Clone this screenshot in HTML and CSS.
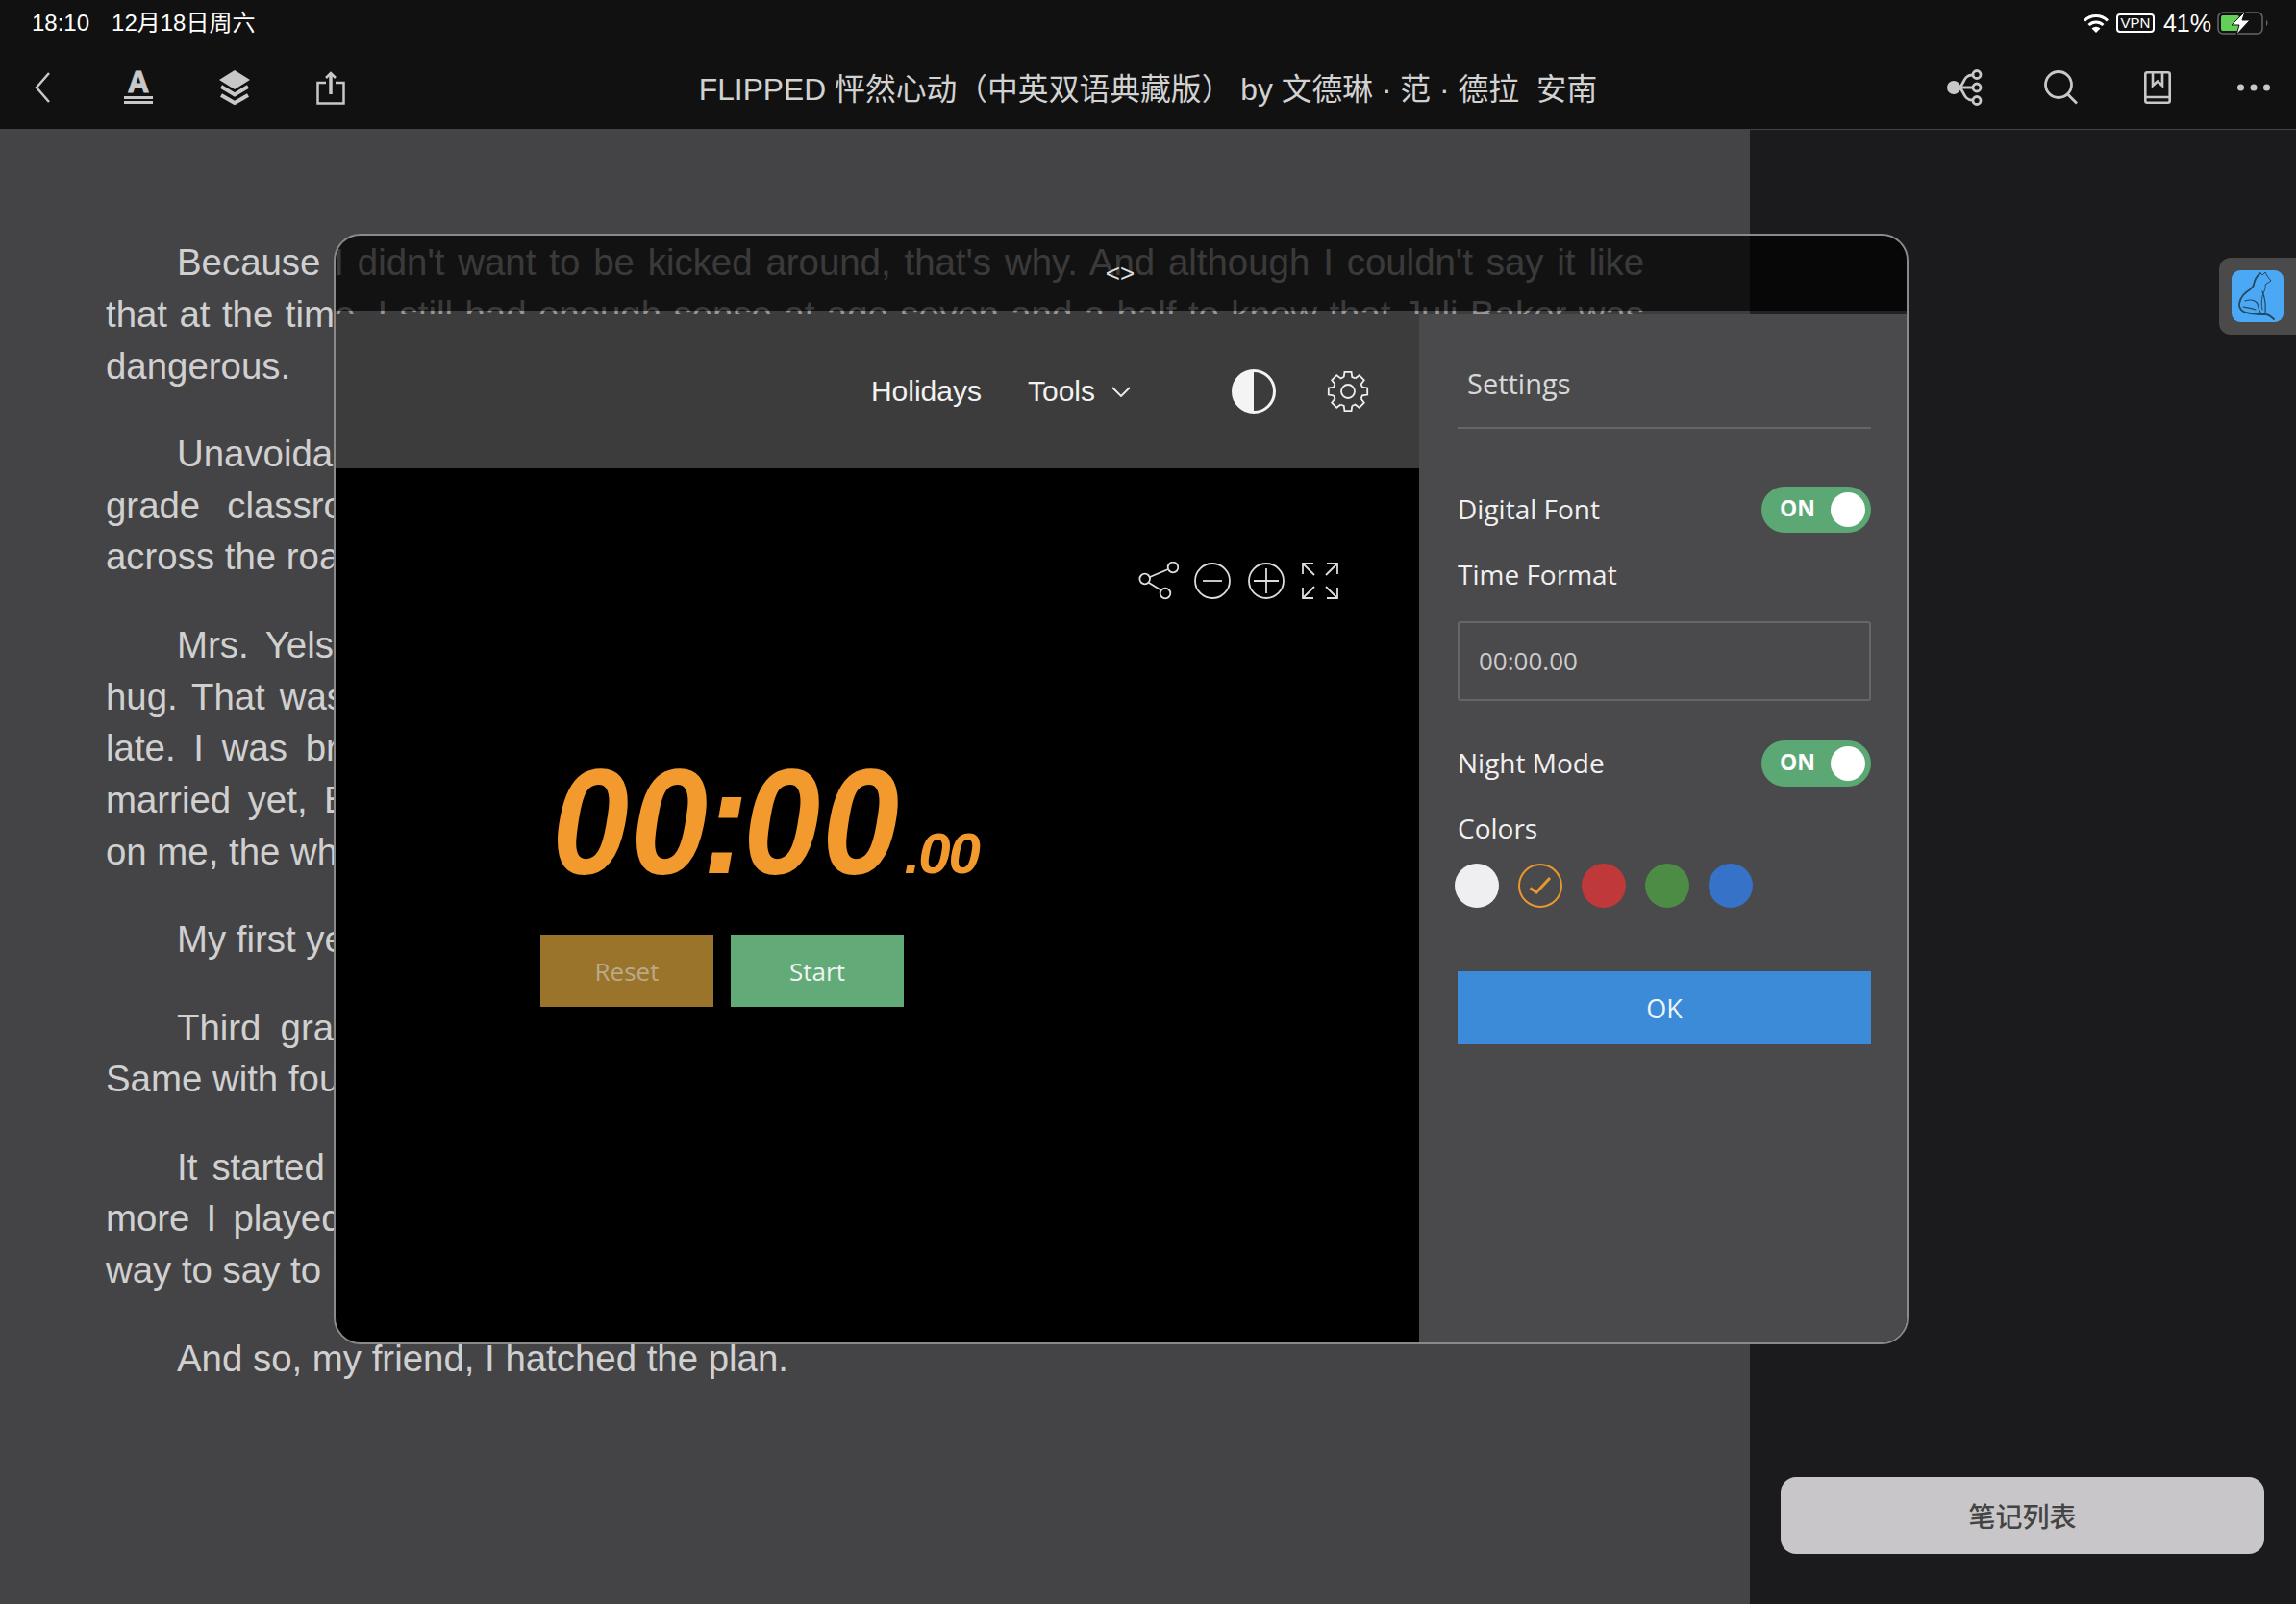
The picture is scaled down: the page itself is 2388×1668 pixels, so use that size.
FILE: index.html
```html
<!DOCTYPE html>
<html lang="en">
<head>
  <meta charset="UTF-8">
  <meta name="viewport" content="width=device-width, initial-scale=1.0">
  <title>FLIPPED</title>
  <link rel="stylesheet" href="styles.css">
</head>
<body>
<div class="screen">
  <header class="topbar">
    <div class="status">
      <div class="status-left"><span>18:10</span><span>12月18日周六</span></div>
      <div class="status-right">
        <svg class="wifi" viewBox="0 0 28 20"><path d="M2 7.500a17 17 0 0 1 24 0M6.500 12a11 11 0 0 1 15 0" fill="none" stroke="#fff" stroke-width="3"/><path d="M14 20l-4.500-4.500a6.500 6.500 0 0 1 9 0z" fill="#fff"/></svg>
        <span class="vpn">VPN</span>
        <span class="percent">41%</span>
        <svg class="battery" viewBox="0 0 54 24"><rect x="1" y="1" width="46" height="22" rx="5" fill="none" stroke="#666" stroke-width="1.500"/><rect x="4" y="4" width="19" height="16" rx="2" fill="#63cf57"/><path d="M51 8.500q3 3.500 0 7z" fill="#666"/><path d="M29 0L15 14h8l-3 10 14-15h-8z" fill="#fff" stroke="#111"/></svg>
      </div>
    </div>
    <div class="toolbar">
      <div class="tools">
        <span class="tool"><svg width="16" height="32" viewBox="0 0 16 32"><path d="M15 1L2 16l13 15" fill="none" stroke="#c8c8c8" stroke-width="2.500"/></svg></span>
        <span class="tool"><span class="font-a"><span class="font-a-letter">A</span><i></i><i></i></span></span>
        <span class="tool"><svg width="32" height="36" viewBox="0 0 32 36"><path d="M16 0l16 10-16 10L0 10z" fill="#c8c8c8"/><path d="M2 17l14 8.500L30 17M2 26l14 8 14-8" fill="none" stroke="#c8c8c8" stroke-width="4"/></svg></span>
        <span class="tool"><svg width="30" height="35" viewBox="0 0 30 35"><path d="M10 12H1.500v21.500h27V12H20" fill="none" stroke="#c8c8c8" stroke-width="2.500"/><path d="M15 3v21" stroke="#c8c8c8" stroke-width="3.500"/><path d="M10 7l5-5 5 5" fill="none" stroke="#c8c8c8" stroke-width="2.500"/></svg></span>
      </div>
      <div class="book-title">FLIPPED 怦然心动（中英双语典藏版） by 文德琳 · 范 · 德拉&nbsp; 安南</div>
      <div class="tools tools-right">
        <span class="tool"><svg width="38" height="38" viewBox="0 0 38 38"><circle cx="7" cy="19" r="7" fill="#c8c8c8"/><path d="M7 19h20M11 19c7 0 5-13 15-13M11 19c7 0 5 13 15 13" fill="none" stroke="#c8c8c8" stroke-width="2.800"/><g fill="#111" stroke="#c8c8c8" stroke-width="2.800"><circle cx="31" cy="5.500" r="4"/><circle cx="31" cy="19" r="4"/><circle cx="31" cy="32.500" r="4"/></g></svg></span>
        <span class="tool"><svg width="36" height="36" viewBox="0 0 36 36"><circle cx="15" cy="15" r="13.500" fill="none" stroke="#c8c8c8" stroke-width="2.800"/><path d="M24.500 25L34 34.500" stroke="#c8c8c8" stroke-width="2.800"/></svg></span>
        <span class="tool"><svg width="28" height="34" viewBox="0 0 28 34"><rect x="1.300" y="1.300" width="25.400" height="31.400" rx="2" fill="none" stroke="#c8c8c8" stroke-width="2.600"/><path d="M1 27h26M9 1v14l5-4.500 5 4.500V1" fill="none" stroke="#c8c8c8" stroke-width="2.600"/></svg></span>
        <span class="tool"><svg width="34" height="8" viewBox="0 0 34 8"><g fill="#c8c8c8"><circle cx="3.500" cy="4" r="3.500"/><circle cx="17" cy="4" r="3.500"/><circle cx="30.500" cy="4" r="3.500"/></g></svg></span>
      </div>
    </div>
  </header>

  <div class="reader">
    <article class="page">
      <p>
        <span class="ln first">Because I didn't want to be kicked around, that's why. And although I couldn't say it like</span>
        <span class="ln">that at the time, I still had enough sense at age seven and a half to know that Juli Baker was</span>
        <span class="ln end">dangerous.</span>
      </p>
      <p>
        <span class="ln first">Unavoidable, really. She had been sitting right there in my second</span>
        <span class="ln">grade classroom from the very first day, and her house was just over there, right</span>
        <span class="ln end">across the road from mine.</span>
      </p>
      <p>
        <span class="ln first">Mrs. Yelson told all of us to find a partner, and then she gave Juli a really big warm</span>
        <span class="ln">hug. That was the way the whole of the school year went along, because I kept on coming</span>
        <span class="ln">late. I was brought in by my mother and she said she was glad, and she asked me if I</span>
        <span class="ln">married yet, Bryce? and she would not give up, not for a single moment, and she kept it</span>
        <span class="ln end">on me, the whole class was laughing and pointing, and the teacher did nothing about it</span>
      </p>
      <p>
        <span class="ln first end">My first year with her.</span>
      </p>
      <p>
        <span class="ln first">Third grade was no better, and it went on like that all year long and then the year</span>
        <span class="ln end">Same with fourth.</span>
      </p>
      <p>
        <span class="ln first">It started to get on my nerves, you know, and the harder I tried to keep away from her</span>
        <span class="ln">more I played it cool the more she came around, and there was no way out of this at all</span>
        <span class="ln end">way to say to her to go away.</span>
      </p>
      <p>
        <span class="ln first end">And so, my friend, I hatched the plan.</span>
      </p>
    </article>
    <aside class="side">
      <button class="notes">笔记列表</button>
    </aside>
  </div>

  <div class="cat-tile">
    <div class="cat">
      <svg width="54" height="54" viewBox="0 0 54 54" fill="none" stroke="#234a60" stroke-linecap="round">
        <path d="M30 3c-4 3-6 7-7 12-1 5-7 6-11 11-4 5-6 12-1 16 5 4 16 4 24 4 4 0 6 2 9 5" stroke-width="1.800"/>
        <path d="M30 3l2 2 3-3 2 4 4 5-3 2-3 2c1 4-2 8-3 12-1 5-1 9 0 14" stroke-width="1"/>
        <path d="M14 32c5-2 11-1 13 3 1 3 1 6 3 9M12 38c4 1 9 1 13 3" stroke-width="1.200"/>
        <path d="M32 22c2 5 4 12 3 22" stroke-width="1.200"/>
      </svg>
    </div>
  </div>

  <section class="modal">
    <div class="modal-top"><span class="handle">&lt;&gt;</span></div>
    <div class="modal-band"></div>
    <div class="modal-body">
      <div class="timer-pane">
        <nav class="timer-nav">
          <span class="nav-holidays">Holidays</span>
          <span class="nav-tools">Tools</span>
          <svg class="nav-chevron" width="20" height="11" viewBox="0 0 20 11"><path d="M1 1l9 9 9-9" fill="none" stroke="#eee" stroke-width="1.800"/></svg>
          <svg class="nav-half" width="46" height="46" viewBox="0 0 46 46"><circle cx="23" cy="23" r="21.500" fill="none" stroke="#f4f4f4" stroke-width="3"/><path d="M23 1.500a21.500 21.500 0 0 0 0 43z" fill="#f4f4f4"/></svg>
          <svg class="nav-gear" width="44" height="44" viewBox="-22 -22 44 44" fill="none" stroke="#eee" stroke-width="1.800">
            <defs><path id="tooth" d="M-4.270-14.900L-3.560-20.190H3.560L4.270-14.900A15.500 15.500 0 0 1 7.510-13.560"/></defs>
            <use href="#tooth"/><use href="#tooth" transform="rotate(45)"/><use href="#tooth" transform="rotate(90)"/><use href="#tooth" transform="rotate(135)"/><use href="#tooth" transform="rotate(180)"/><use href="#tooth" transform="rotate(225)"/><use href="#tooth" transform="rotate(270)"/><use href="#tooth" transform="rotate(315)"/>
            <circle r="7"/>
          </svg>
        </nav>
        <div class="stage">
          <div class="stage-tools">
            <svg class="stage-share" width="42" height="40" viewBox="0 0 42 40" fill="none" stroke="#ddd" stroke-width="1.800"><path d="M12 16l19-8M11 22l13 8"/><circle cx="6.700" cy="18" r="5.300"/><circle cx="36" cy="6" r="5.300"/><circle cx="28" cy="33" r="5.300"/></svg>
            <svg width="38" height="38" viewBox="0 0 38 38" fill="none" stroke="#ddd" stroke-width="1.800"><circle cx="19" cy="19" r="18"/><path d="M9 19h20"/></svg>
            <svg width="38" height="38" viewBox="0 0 38 38" fill="none" stroke="#ddd" stroke-width="1.800"><circle cx="19" cy="19" r="18"/><path d="M6 19h26M19 6v26"/></svg>
            <svg width="38" height="38" viewBox="0 0 38 38" fill="none" stroke="#ddd" stroke-width="1.800"><path d="M1 12V1h11M1 1l12 12M26 1h11v11M37 1L25 13M1 26v11h11M1 37l12-12M37 26v11H26M37 37L25 25"/></svg>
          </div>
          <div class="clock"><span class="clock-main">00<span class="clock-colon">:</span>00</span><span class="clock-small">.00</span></div>
          <div class="timer-btns">
            <button class="btn-reset">Reset</button>
            <button class="btn-start">Start</button>
          </div>
        </div>
      </div>
      <div class="settings">
        <h3 class="settings-title">Settings</h3>
        <div class="row row-font"><span class="row-label">Digital Font</span><span class="toggle"><b>ON</b><i></i></span></div>
        <div class="label label-format">Time Format</div>
        <div class="format-input">00:00.00</div>
        <div class="row row-night"><span class="row-label">Night Mode</span><span class="toggle"><b>ON</b><i></i></span></div>
        <div class="label label-colors">Colors</div>
        <div class="swatches">
          <span class="swatch sw-white"></span>
          <span class="swatch sw-orange"><svg width="42" height="42" viewBox="0 0 42 42"><path d="M10.500 23.500l6.500 4.500 14-15" fill="none" stroke="#e8982e" stroke-width="3"/></svg></span>
          <span class="swatch sw-red"></span>
          <span class="swatch sw-green"></span>
          <span class="swatch sw-blue"></span>
        </div>
        <button class="ok">OK</button>
      </div>
    </div>
  </section>
</div>
</body>
</html>
```
FILE: styles.css
```css
* {
  box-sizing: border-box;
}

body {
  margin: 0;
  background: #1b1a1c;
  font-family: "Liberation Sans", "Noto Sans CJK SC", sans-serif;
}

.screen {
  position: relative;
  width: 2388px;
  height: 1668px;
  overflow: hidden;
  display: flex;
  flex-direction: column;
}

/* top bars */
.topbar {
  height: 135px;
  background: #111;
  border-bottom: 1px solid #444;
  flex-shrink: 0;
}

.status {
  height: 48px;
  padding: 0 28px 0 33px;
  display: flex;
  justify-content: space-between;
  align-items: center;
  color: #fff;
  font-size: 24px;
}

.status-left {
  display: flex;
  align-items: center;
  gap: 23px;
  line-height: 30px;
}

.status-right {
  display: flex;
  align-items: center;
}

.wifi {
  width: 28px;
  height: 20px;
}

.vpn {
  width: 40px;
  height: 20px;
  margin-left: 7px;
  border: 2px solid #fff;
  border-radius: 4px;
  font-size: 15px;
  line-height: 16px;
  text-align: center;
}

.percent {
  margin-left: 9px;
  font-size: 25px;
}

.battery {
  width: 54px;
  height: 24px;
  margin-left: 6px;
}

.toolbar {
  height: 86px;
  display: grid;
  grid-template-columns: 1fr auto 1fr;
  align-items: center;
}

.tools {
  display: flex;
  gap: 12px;
}

.tools-right {
  justify-content: flex-end;
}

.tool {
  width: 88px;
  height: 40px;
  display: flex;
  align-items: center;
  justify-content: center;
}

.font-a {
  width: 30px;
  display: flex;
  flex-direction: column;
  align-items: stretch;
}

.font-a-letter {
  height: 23px;
  color: #c8c8c8;
  font-size: 31px;
  font-weight: 700;
  line-height: 22px;
  text-align: center;
  -webkit-text-stroke: 1px #c8c8c8;
}

.font-a i {
  display: block;
  height: 3px;
  margin-top: 2px;
  background: #c8c8c8;
}

.book-title {
  padding-bottom: 3px;
  color: #d2d2d2;
  font-size: 31.800px;
}

/* book page */
.reader {
  flex: 1;
  display: flex;
}

.page {
  width: 1820px;
  padding: 111px 110px 0;
  background: #444345;
  color: #d0d0d0;
  font-size: 38.400px;
  line-height: 53.800px;
}

.page p {
  margin: 0 0 37.500px;
}

.ln {
  display: block;
  text-align: justify;
  text-align-last: justify;
  white-space: nowrap;
}

.ln.first {
  text-indent: 74px;
}

.ln.end {
  text-align-last: left;
}

.side {
  flex: 1;
  display: flex;
  flex-direction: column;
  justify-content: flex-end;
  padding: 0 33px 52px 32px;
}

.notes {
  height: 80px;
  border: 0;
  border-radius: 16px;
  background: #c8c6c9;
  color: #444;
  font-family: "Noto Sans CJK SC", sans-serif;
  font-size: 28px;
  font-weight: 500;
}

.cat-tile {
  position: absolute;
  left: 2308px;
  top: 268px;
  width: 90px;
  height: 80px;
  padding: 13px;
  border-radius: 12px;
  background: #4a4a4a;
}

.cat {
  width: 54px;
  height: 54px;
  border-radius: 9px;
  background: #4aa8f4;
}

/* modal */
.modal {
  position: absolute;
  left: 347px;
  top: 243px;
  width: 1638px;
  height: 1155px;
  border: 2px solid #8a8a8a;
  border-radius: 28px;
  overflow: hidden;
  display: flex;
  flex-direction: column;
}

.modal-top {
  height: 78px;
  padding-top: 24px;
  padding-right: 2px;
  display: flex;
  justify-content: center;
  background: rgba(0, 0, 0, .72);
}

.handle {
  color: #ddd;
  font-size: 26px;
  line-height: 30px;
}

.modal-band {
  height: 4px;
  background: rgba(50, 50, 50, .35);
}

.modal-body {
  flex: 1;
  display: grid;
  grid-template-columns: 1127px 1fr;
  min-height: 0;
}

.timer-pane {
  display: flex;
  flex-direction: column;
  min-height: 0;
}

.timer-nav {
  height: 160px;
  padding-right: 52px;
  display: flex;
  justify-content: flex-end;
  align-items: center;
  background: #3c3c3c;
  color: #f2f2f2;
  font-size: 30px;
}

.nav-tools {
  margin-left: 48px;
}

.nav-chevron {
  margin-left: 17px;
}

.nav-half {
  margin-left: 105px;
}

.nav-gear {
  margin-left: 53px;
}

.stage {
  flex: 1;
  padding: 97px 84px 0 213px;
  background: #000;
}

.stage-tools {
  display: flex;
  justify-content: flex-end;
  align-items: center;
  gap: 18px;
  height: 40px;
}

.stage-share {
  margin-right: -2px;
}

.clock {
  height: 170px;
  margin-top: 146px;
  padding-left: 12px;
  display: flex;
  align-items: baseline;
  color: #f39a2f;
  font-style: italic;
  font-weight: 700;
  line-height: 170px;
}

.clock-main {
  font-size: 155px;
  letter-spacing: 2px;
  transform: scaleX(.93);
  transform-origin: left;
}

.clock-colon {
  margin: 0 -8px;
}

.clock-small {
  margin-left: -24px;
  font-size: 60px;
  letter-spacing: -2px;
}

.timer-btns {
  margin-top: 32px;
  display: flex;
  gap: 18px;
}

.timer-btns button {
  width: 180px;
  height: 75px;
  border: 0;
  font-family: "Open Sans", sans-serif;
  font-size: 26px;
}

.btn-reset {
  background: #9a742a;
  color: #b9aa8b;
}

.btn-start {
  background: #62aa78;
  color: #f0f4f0;
}

/* settings column */
.settings {
  padding: 0 37px 0 40px;
  background: #4a494b;
  color: #f0f0f0;
  font-family: "Open Sans", sans-serif;
  font-size: 28px;
}

.settings-title {
  height: 119px;
  margin: 0;
  padding: 52px 0 0 10px;
  border-bottom: 2px solid #666;
  color: #d8d8d8;
  font-size: 29px;
  font-weight: 400;
  line-height: 40px;
}

.row {
  height: 48px;
  display: flex;
  justify-content: space-between;
  align-items: center;
}

.row-label {
  padding-bottom: 3px;
}

.row-font {
  margin-top: 60px;
}

.row-night {
  margin-top: 41px;
}

.toggle {
  position: relative;
  width: 114px;
  height: 48px;
  padding-left: 19px;
  border-radius: 24px;
  background: #5ca874;
  color: #fff;
  font-size: 23px;
  line-height: 44px;
}

.toggle i {
  position: absolute;
  right: 6px;
  top: 6px;
  width: 36px;
  height: 36px;
  border-radius: 50%;
  background: #fff;
}

.label {
  height: 40px;
  line-height: 40px;
}

.label-format {
  margin-top: 23px;
}

.label-colors {
  margin-top: 23px;
}

.format-input {
  height: 83px;
  margin-top: 29px;
  padding-left: 20px;
  border: 2px solid #666;
  border-radius: 3px;
  color: #ccc;
  font-size: 26px;
  line-height: 79px;
}

.swatches {
  margin: 17px 0 0 -3px;
  display: flex;
  gap: 20px;
}

.swatch {
  width: 46px;
  height: 46px;
  border-radius: 50%;
}

.sw-white {
  background: #efeef0;
}

.sw-orange {
  border: 2px solid #e8982e;
}

.sw-orange svg {
  display: block;
}

.sw-red {
  background: #c0393a;
}

.sw-green {
  background: #4c8c45;
}

.sw-blue {
  background: #3572c8;
}

.ok {
  display: block;
  width: 100%;
  height: 76px;
  margin-top: 66px;
  border: 0;
  background: #3b8bd8;
  color: #eef4fa;
  font-family: "Open Sans", sans-serif;
  font-size: 27px;
}
```
